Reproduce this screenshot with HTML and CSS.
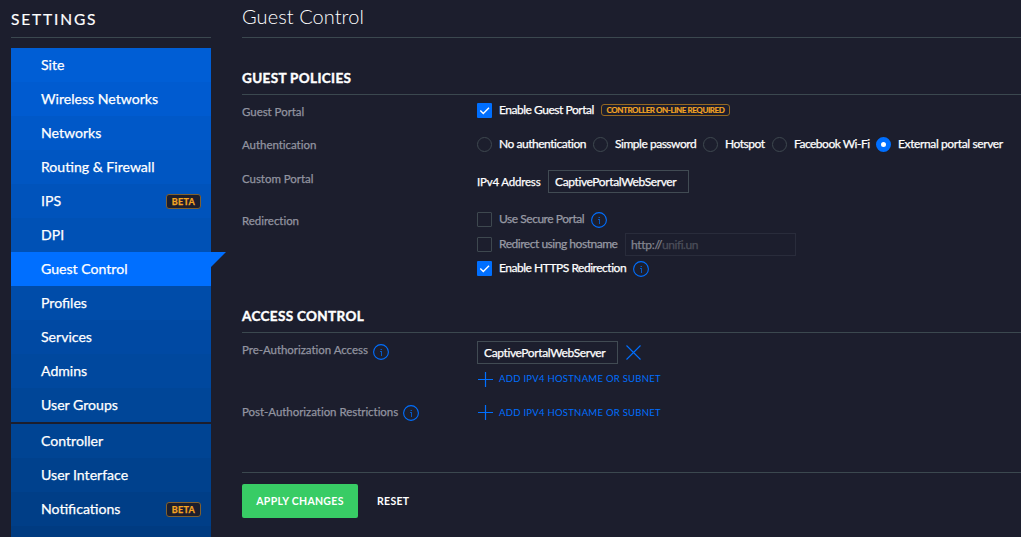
FILE: index.html
```html
<!DOCTYPE html>
<html lang="en">
<head>
<meta charset="utf-8">
<title>Guest Control</title>
<link rel="stylesheet" href="styles.css">
</head>
<body>
<svg class="defs" width="0" height="0" aria-hidden="true">
  <symbol id="info" viewBox="0 0 16 16"><circle cx="8" cy="8" r="7.4" fill="none" stroke="#006fff" stroke-width="1.1"/><path d="M7.5 5.5h1.5M7 7.5h1M8.5 7v5" fill="none" stroke="#0759c2" stroke-width="1"/></symbol>
  <symbol id="plus" viewBox="0 0 15 15"><path d="M7.5 0v15M0 7.5h15" stroke="#006fff" stroke-width="1.2"/></symbol>
  <symbol id="check" viewBox="0 0 15 15"><path d="M3.3 7.4l3 3 5.7-5.6" fill="none" stroke="#fff" stroke-width="1.4"/></symbol>
</svg>
<div class="app">
  <aside class="sidebar">
    <h2 class="side-title">SETTINGS</h2>
    <nav class="menu">
      <a class="item s1">Site</a>
      <a class="item s2">Wireless Networks</a>
      <a class="item s3">Networks</a>
      <a class="item s4">Routing &amp; Firewall</a>
      <a class="item s5">IPS<span class="beta">BETA</span></a>
      <a class="item s6">DPI</a>
      <a class="item active">Guest Control</a>
      <a class="item s8">Profiles</a>
      <a class="item s9">Services</a>
      <a class="item s10">Admins</a>
      <a class="item s11">User Groups</a>
      <a class="item s12 group">Controller</a>
      <a class="item s13">User Interface</a>
      <a class="item s14">Notifications<span class="beta">BETA</span></a>
      <a class="item s15"></a>
    </nav>
  </aside>
  <main class="main">
    <h1 class="page-title">Guest Control</h1>
    <section class="policies">
      <h3 class="section-title">GUEST POLICIES</h3>
      <div class="row portal">
        <div class="label">Guest Portal</div>
        <div class="field"><span class="box on"><svg width="15" height="15"><use href="#check"/></svg></span><span class="text t-portal">Enable Guest Portal</span><span class="required">CONTROLLER ON-LINE REQUIRED</span></div>
      </div>
      <div class="row auth">
        <div class="label">Authentication</div>
        <div class="field">
          <span class="option o1"><i class="radio"></i><span class="text">No authentication</span></span>
          <span class="option o2"><i class="radio"></i><span class="text">Simple password</span></span>
          <span class="option o3"><i class="radio"></i><span class="text">Hotspot</span></span>
          <span class="option o4"><i class="radio"></i><span class="text">Facebook Wi-Fi</span></span>
          <span class="option o5"><i class="radio on"></i><span class="text">External portal server</span></span>
        </div>
      </div>
      <div class="row custom">
        <div class="label">Custom Portal</div>
        <div class="field"><span class="text address">IPv4 Address</span><span class="input">CaptivePortalWebServer</span></div>
      </div>
      <div class="row redirect">
        <div class="label">Redirection</div>
        <div class="stack">
          <div class="field dim secure"><span class="box"></span><span class="text">Use Secure Portal</span><svg class="info" width="16" height="16"><use href="#info"/></svg></div>
          <div class="field dim host"><span class="box"></span><span class="text t-host">Redirect using hostname</span><span class="input off">http://<span class="hint">unifi.un</span></span></div>
          <div class="field https"><span class="box on"><svg width="15" height="15"><use href="#check"/></svg></span><span class="text">Enable HTTPS Redirection</span><svg class="info" width="16" height="16"><use href="#info"/></svg></div>
        </div>
      </div>
    </section>
    <section class="access">
      <h3 class="section-title">ACCESS CONTROL</h3>
      <div class="row pre">
        <div class="label">Pre-Authorization Access<svg class="info" width="16" height="16"><use href="#info"/></svg></div>
        <div class="stack">
          <div class="field server"><span class="input">CaptivePortalWebServer</span><svg class="remove" width="15" height="15" viewBox="0 0 15 15"><path d="M.5.5l14 14M14.5.5l-14 14" stroke="#006fff" stroke-width="1.1"/></svg></div>
          <a class="add"><svg width="15" height="15"><use href="#plus"/></svg><span class="add-text">ADD IPV4 HOSTNAME OR SUBNET</span></a>
        </div>
      </div>
      <div class="row post">
        <div class="label">Post-Authorization Restrictions<svg class="info" width="16" height="16"><use href="#info"/></svg></div>
        <a class="add"><svg width="15" height="15"><use href="#plus"/></svg><span class="add-text">ADD IPV4 HOSTNAME OR SUBNET</span></a>
      </div>
    </section>
    <footer class="actions"><button class="apply">APPLY CHANGES</button><button class="reset">RESET</button></footer>
  </main>
</div>
</body>
</html>
```
FILE: styles.css
```css
* { box-sizing: border-box; }
body { margin: 0; background: #1c1e2d; color: #fff; font-family: Lato, sans-serif; font-size: 12px; overflow: hidden; }
.defs { display: block; }
.app { display: flex; gap: 31px; height: 537px; overflow: hidden; padding-left: 11px; }
h1, h2, h3 { margin: 0; font-weight: 400; }
.sidebar { flex: none; width: 200px; }
.side-title { height: 38px; padding-top: 1px; border-bottom: 1px solid #3b484f; font-size: 15.5px; line-height: 36px; letter-spacing: 1.85px; -webkit-text-stroke: .2px; }
.menu { margin-top: 10px; }
.item { display: flex; align-items: center; justify-content: space-between; height: 34px; padding: 0 10px 2px 30px; font-size: 14.1px; -webkit-text-stroke: .25px; }
.group { margin-top: 2px; }
.s1 { background: #005ed5; }
.s2 { background: #005bd0; }
.s3 { background: #0058c8; }
.s4 { background: #0056c2; }
.s5 { background: #0053bb; }
.s6 { background: #0051b5; }
.s8 { background: #004ca9; }
.s9 { background: #0049a3; }
.s10 { background: #00489e; }
.s11 { background: #004698; }
.s12 { background: #004493; }
.s13 { background: #00418d; }
.s14 { background: #003e87; }
.s15 { background: #003b81; }
.active { position: relative; background: #006fff; }
.active::after { content: ""; position: absolute; left: 200px; top: 0; border-top: 15px solid #006fff; border-right: 15px solid transparent; }
.beta { width: 35px; height: 15px; margin-top: 2px; border: 1px solid #80602f; border-radius: 3px; background: #1c1e2d; color: #f5a623; font-size: 9px; font-weight: 700; line-height: 13px; letter-spacing: .3px; text-align: center; }
.main { flex: 1; min-width: 0; }
.page-title { height: 38px; border-bottom: 1px solid #3b484f; font-size: 20px; font-weight: 300; line-height: 32px; letter-spacing: .07px; }
.section-title { height: 27px; border-bottom: 1px solid #3b484f; font-size: 13.5px; font-weight: 700; line-height: 20px; letter-spacing: .35px; white-space: nowrap; -webkit-text-stroke: .4px; }
.policies { height: 238px; padding-top: 30px; }
.row { display: grid; grid-template-columns: 235px 1fr; align-items: start; }
.label { display: flex; height: 20px; line-height: 20px; font-size: 11.5px; letter-spacing: -.04px; color: #9294a0; white-space: nowrap; -webkit-text-stroke: .25px; }
.field { display: flex; align-items: center; white-space: nowrap; }
.text { font-size: 12px; letter-spacing: -.47px; line-height: 16px; -webkit-text-stroke: .25px; }
.box { flex: none; width: 15px; height: 15px; margin-right: 7px; border: 1px solid #3e484f; border-radius: 1px; }
.box.on { border: 0; background: #006fff; }
.box svg { display: block; }
.portal { height: 40px; padding-top: 7px; }
.portal .field { height: 16px; }
.required { height: 12px; width: 129px; margin: -1px 0 0 7px; border: 1px solid #966922; border-radius: 3px; color: #f5a623; font-size: 8px; font-weight: 700; line-height: 10px; letter-spacing: -.42px; text-align: center; -webkit-text-stroke: .15px; }
.t-portal { width: 95px; }
.auth { height: 34px; }
.auth .field { height: 18px; }
.option { display: flex; align-items: center; }
.o1 { width: 116px; }
.o2 { width: 110px; }
.o3 { width: 69px; }
.o4 { width: 104px; }
.o4 .text { letter-spacing: -.5px; }
.o5 .text { letter-spacing: -.38px; }
.radio { flex: none; width: 15px; height: 15px; margin-right: 7px; border: 1px solid #3e484f; border-radius: 50%; }
.radio.on { border: 5px solid #006fff; background: #fff; }
.custom { height: 42px; }
.custom .field { height: 25px; }
.text.address { width: 71px; font-size: 11.5px; letter-spacing: -.2px; }
.input { width: 141px; height: 23px; padding: 0 6px; border: 1px solid #414b53; font-size: 12px; letter-spacing: -.38px; line-height: 21px; -webkit-text-stroke: .25px; }
.off { width: 171px; padding-left: 5px; border-color: #292c3b; color: #83858f; letter-spacing: -.3px; }
.hint { color: #4c4e5a; letter-spacing: -.45px; }
.dim .text { color: #989aa4; }
.info { flex: none; margin-left: 7px; }
.secure { height: 18px; }
.secure .text, .host .text, .https .text { margin-top: -2px; }
.secure .box, .https .box { margin-top: -1px; }
.host { height: 31px; }
.t-host { width: 126px; }
.https { height: 18px; }
.access { height: 196px; padding-top: 30px; }
.pre, .post { padding-top: 7px; }
.label .info { margin: 4px 0 0 5px; }
.post .info { margin-top: 3px; }
.pre { height: 62px; }
.server { height: 23px; margin-top: 1px; }
.remove { margin-left: 8px; }
.add { display: flex; align-items: center; gap: 6px; height: 18px; padding-left: 1px; color: #006fff; font-size: 9.5px; letter-spacing: .27px; white-space: nowrap; }
.pre .add { margin-top: 6px; }
.pre .add-text { margin-top: -2px; }
.post .add { margin-top: 1px; }
.actions { display: flex; border-top: 1px solid #3b484f; padding-top: 11px; }
.apply, .reset { height: 34px; border: 0; border-radius: 2px; padding: 0; color: #fff; font: 700 10.5px Lato, sans-serif; letter-spacing: .3px; }
.apply { width: 116px; background: #38cc65; }
.reset { margin-left: 19px; background: none; }
```
